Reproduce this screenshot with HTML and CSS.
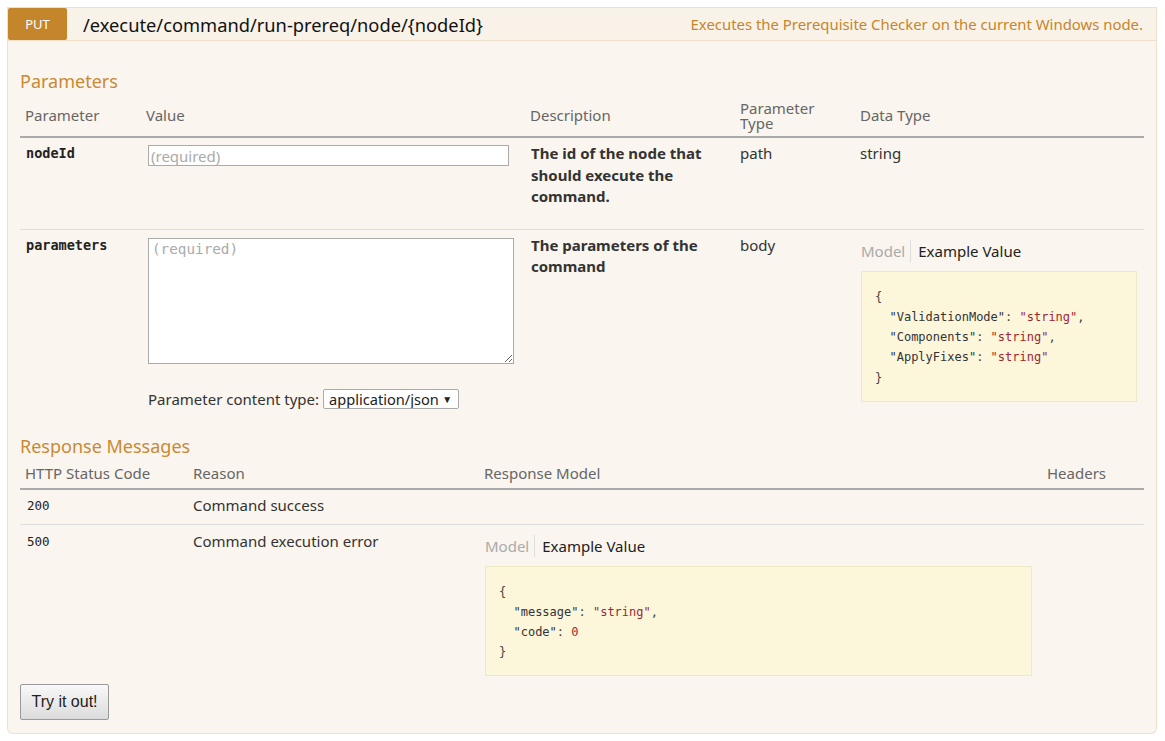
FILE: index.html
```html
<!DOCTYPE html>
<html lang="en">
<head>
<meta charset="utf-8">
<title>PUT /execute/command/run-prereq/node/{nodeId}</title>
<link rel="stylesheet" href="styles.css">
</head>
<body>
<div class="operation">
  <div class="heading">
    <span class="method">PUT</span>
    <span class="path">/execute/command/run-prereq/node/{nodeId}</span>
    <span class="summary">Executes the Prerequisite Checker on the current Windows node.</span>
  </div>
  <div class="content">
    <h4 class="section-title">Parameters</h4>
    <table class="params">
      <colgroup>
        <col class="c-param"><col class="c-value"><col class="c-desc"><col class="c-ptype"><col class="c-dtype">
      </colgroup>
      <thead>
        <tr>
          <th>Parameter</th>
          <th>Value</th>
          <th>Description</th>
          <th class="two-line">Parameter<br>Type</th>
          <th>Data Type</th>
        </tr>
      </thead>
      <tbody>
        <tr class="row-sep">
          <td class="pname">nodeId</td>
          <td><input class="text-input" type="text" placeholder="(required)"></td>
          <td class="pdesc">The id of the node that should execute the command.</td>
          <td>path</td>
          <td>string</td>
        </tr>
        <tr>
          <td class="pname">parameters</td>
          <td>
            <textarea class="body-input" placeholder="(required)"></textarea>
            <div class="content-type">
              <span>Parameter content type:</span>
              <span class="select-wrap">
                <select class="select"><option>application/json</option></select>
                <span class="caret">▼</span>
              </span>
            </div>
          </td>
          <td class="pdesc">The parameters of the command</td>
          <td>body</td>
          <td>
            <div class="tabs tabs-params"><span class="tab tab-off">Model</span><span class="tab tab-on">Example Value</span></div>
            <pre class="code code-params">{
  <span class="k">"ValidationMode"</span>: <span class="s">"string"</span>,
  <span class="k">"Components"</span>: <span class="s">"string"</span>,
  <span class="k">"ApplyFixes"</span>: <span class="s">"string"</span>
}</pre>
          </td>
        </tr>
      </tbody>
    </table>

    <h4 class="section-title resp-title">Response Messages</h4>
    <table class="responses">
      <colgroup>
        <col class="r-code"><col class="r-reason"><col class="r-model"><col class="r-headers">
      </colgroup>
      <thead>
        <tr>
          <th>HTTP Status Code</th>
          <th>Reason</th>
          <th>Response Model</th>
          <th>Headers</th>
        </tr>
      </thead>
      <tbody>
        <tr class="row-sep">
          <td class="scode">200</td>
          <td>Command success</td>
          <td></td>
          <td></td>
        </tr>
        <tr class="last">
          <td class="scode">500</td>
          <td>Command execution error</td>
          <td>
            <div class="tabs tabs-resp"><span class="tab tab-off">Model</span><span class="tab tab-on">Example Value</span></div>
            <pre class="code code-resp">{
  <span class="k">"message"</span>: <span class="s">"string"</span>,
  <span class="k">"code"</span>: <span class="s">0</span>
}</pre>
          </td>
          <td></td>
        </tr>
      </tbody>
    </table>
    <div class="actions">
      <button class="try" type="button">Try it out!</button>
    </div>
  </div>
</div>
</body>
</html>
```
FILE: styles.css
```css
* { box-sizing: border-box; }

html, body { margin: 0; background: #ffffff; }

body {
  padding: 7px 8px 0 7px;
  font-family: "Noto Sans", "Open Sans", sans-serif;
  font-size: 15px;
  color: #333;
}

.operation { width: 1150px; }

.heading {
  display: flex;
  align-items: center;
  height: 34px;
  background: #f9f2e9;
  border: 1px solid #f0e0ca;
}

.method {
  width: 59px;
  height: 32px;
  flex: none;
  display: flex;
  align-items: center;
  justify-content: center;
  background: #c5862b;
  color: #fff;
  font-size: 13px;
  border-radius: 2px;
}

.path {
  margin-left: 16px;
  font-size: 18.3px;
  color: #111;
  white-space: nowrap;
}

.summary {
  margin-left: auto;
  padding-right: 13px;
  font-size: 14.9px;
  color: #c5862b;
  white-space: nowrap;
}

.content {
  background: #faf5ee;
  border: 1px solid #f0e0ca;
  border-top: none;
  border-radius: 0 0 6px 6px;
  padding: 0 12px 13px 12px;
}

.section-title {
  margin: 0;
  padding-top: 29px;
  font-size: 18px;
  font-weight: normal;
  line-height: 23px;
  color: #c88a35;
}

.resp-title { padding-top: 5px; }

table {
  width: 1124px;
  border-collapse: collapse;
  table-layout: fixed;
}

th {
  text-align: left;
  font-weight: normal;
  color: #666;
  font-size: 15px;
  line-height: 15px;
  vertical-align: middle;
  padding: 6px 5px 4px 5px;
  border-bottom: 2px solid #aaa;
}

.params thead th { height: 44px; }
.responses thead th { height: 31px; }

td {
  vertical-align: top;
  padding: 5px 5px 20px 5px;
  line-height: 21px;
  font-size: 15px;
  color: #333;
}

.params .row-sep td { padding-bottom: 21px; }

.row-sep td { border-bottom: 1px solid #ddd; }

.c-param { width: 121px; }
.c-value { width: 384px; }
.c-desc { width: 210px; }
.c-ptype { width: 120px; }
.c-dtype { width: 289px; }

.pname {
  font-family: "DejaVu Sans Mono", "Liberation Mono", monospace;
  font-weight: bold;
  font-size: 13.5px;
  color: #222;
  padding-left: 6px;
}

.pdesc {
  font-weight: bold;
  line-height: 21.5px;
  padding-left: 6px;
}

.text-input {
  display: block;
  width: 361px;
  height: 21px;
  margin: 2px 0 0 2px;
  padding: 0 2px;
  border: 1px solid #aaa;
  background: #fff;
  font-family: "Noto Sans", sans-serif;
  font-size: 15px;
}

.text-input::placeholder { color: #aaa; }

.body-input {
  display: block;
  width: 366px;
  height: 126px;
  margin: 3px 0 0 2px;
  padding: 2px 3px;
  border: 1px solid #aaa;
  background: #fff;
  font-family: "DejaVu Sans Mono", monospace;
  font-size: 14.3px;
  resize: both;
}

.body-input::placeholder { color: #aaa; }

.content-type {
  display: flex;
  align-items: center;
  gap: 4px;
  margin: 25px 0 0 2px;
  font-size: 15px;
  color: #333;
}

.select-wrap {
  position: relative;
  display: inline-block;
}

.select {
  appearance: none;
  -webkit-appearance: none;
  height: 20px;
  width: 136px;
  padding: 0 14px 0 5px;
  border: 1px solid #aaa;
  border-radius: 2px;
  background: #fff;
  font-family: "Noto Sans", sans-serif;
  font-size: 14.6px;
  color: #222;
  line-height: 18px;
}

.caret {
  position: absolute;
  right: 7px;
  top: 3px;
  font-size: 10px;
  line-height: 14px;
  color: #222;
  pointer-events: none;
}

.tabs {
  display: flex;
  align-items: center;
  margin-left: 1px;
  font-size: 15px;
  line-height: 22px;
}

.tabs-params { margin-top: 5px; }
.tabs-resp { margin-top: 4px; }

.tab-off {
  color: #aaa;
  padding-right: 5px;
  border-right: 1px solid #ddd;
}

.tab-on {
  color: #222;
  padding-left: 7px;
}

.code {
  margin: 9px 0 0 1px;
  background: #fcf6db;
  border: 1px solid #efe8c5;
  font-family: "DejaVu Sans Mono", "Liberation Mono", monospace;
  font-size: 12px;
  line-height: 20.25px;
  color: #444;
  white-space: pre;
}

.code-params {
  width: 276px;
  padding: 15px 13px 13px 13px;
}

.code-resp {
  width: 547px;
  padding: 15px 13px 12px 13px;
}

.k { color: #333; }
.s { color: #a0262f; }

.r-code { width: 168px; }
.r-reason { width: 291px; }
.r-model { width: 563px; }
.r-headers { width: 102px; }

.responses td { padding: 5px 5px 8px 5px; }
.responses tr.last td { padding: 6px 5px 0 5px; }

.scode {
  font-family: "DejaVu Sans Mono", "Liberation Mono", monospace;
  font-size: 12.5px;
  color: #222;
  padding-left: 7px !important;
}

.actions { padding-top: 8px; }

.try {
  display: block;
  width: 89px;
  height: 36px;
  padding: 0;
  border: 1px solid #999;
  border-radius: 2px;
  background: linear-gradient(#f8f8f8, #dcdcdc);
  font-family: "Liberation Sans", Arial, sans-serif;
  font-size: 16px;
  color: #222;
}
```
